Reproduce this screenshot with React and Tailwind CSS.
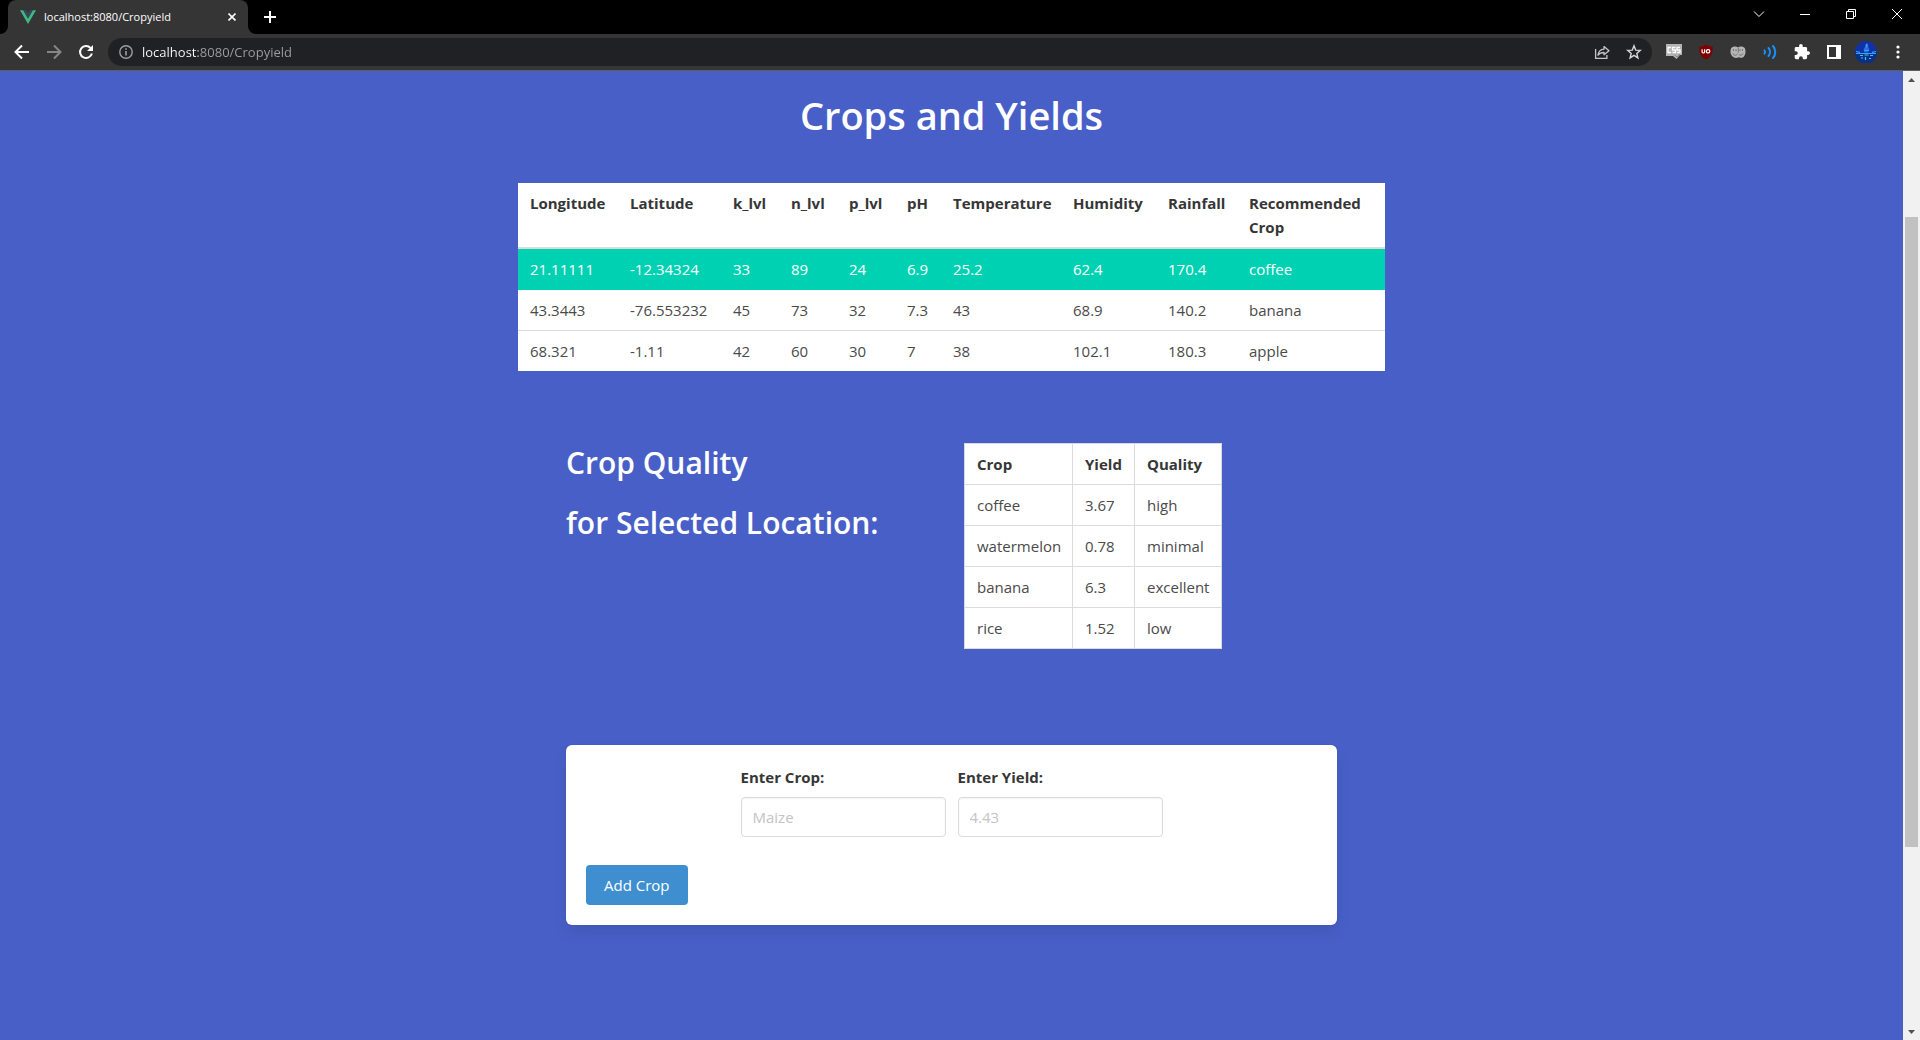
import React from "react";

const readings = [
  ["21.11111", "-12.34324", "33", "89", "24", "6.9", "25.2", "62.4", "170.4", "coffee"],
  ["43.3443", "-76.553232", "45", "73", "32", "7.3", "43", "68.9", "140.2", "banana"],
  ["68.321", "-1.11", "42", "60", "30", "7", "38", "102.1", "180.3", "apple"],
];

const readingColumns = [
  ["Longitude", "w-[100px]"],
  ["Latitude", "w-[103px]"],
  ["k_lvl", "w-[58px]"],
  ["n_lvl", "w-[58px]"],
  ["p_lvl", "w-[58px]"],
  ["pH", "w-[46px]"],
  ["Temperature", "w-[120px]"],
  ["Humidity", "w-[95px]"],
  ["Rainfall", "w-[81px]"],
  ["Recommended Crop", "w-[148px]"],
];

const crops = [
  ["coffee", "3.67", "high"],
  ["watermelon", "0.78", "minimal"],
  ["banana", "6.3", "excellent"],
  ["rice", "1.52", "low"],
];

function WindowButton({ label, children }) {
  return (
    <button type="button" aria-label={label} className="flex h-7 w-[46px] items-center justify-center text-white">
      <svg width="12" height="12" viewBox="0 0 12 12" fill="none" stroke="currentColor" strokeWidth="1">
        {children}
      </svg>
    </button>
  );
}

function ToolButton({ label, className = "text-white", children }) {
  return (
    <button type="button" aria-label={label} className={`flex h-8 w-8 shrink-0 items-center justify-center ${className}`}>
      {children}
    </button>
  );
}

function TabStrip() {
  return (
    <div className="flex h-[34px] items-end bg-black">
      <svg width="8" height="8" viewBox="0 0 8 8" className="shrink-0">
        <path d="M8 0v8H0a8 8 0 0 0 8-8z" fill="#353535" />
      </svg>
      <div className="flex h-full w-60 items-center rounded-t-lg bg-[#353535] pr-2 pl-3">
        <svg width="16" height="16" viewBox="0 0 16 16" className="mr-2 shrink-0">
          <path d="M0 1.2h3.2L8 9.4l4.8-8.2H16L8 15z" fill="#41b883" />
          <path d="M3.2 1.2h3L8 4.3l1.8-3.1h3L8 9.4z" fill="#35495e" />
        </svg>
        <span className="grow truncate text-[11px] leading-4 text-white">localhost:8080/Cropyield</span>
        <button type="button" aria-label="Close tab" className="flex h-4 w-4 items-center justify-center text-white">
          <svg width="8" height="8" viewBox="0 0 8 8" stroke="currentColor" strokeWidth="1.6">
            <path d="M.5.5l7 7M7.5.5l-7 7" />
          </svg>
        </button>
      </div>
      <svg width="8" height="8" viewBox="0 0 8 8" className="shrink-0">
        <path d="M0 0v8h8a8 8 0 0 1-8-8z" fill="#353535" />
      </svg>
      <button type="button" aria-label="New tab" className="flex h-[34px] w-7 items-center justify-center text-white">
        <svg width="12" height="12" viewBox="0 0 12 12" stroke="currentColor" strokeWidth="2">
          <path d="M6 0v12M0 6h12" />
        </svg>
      </button>
      <div className="ml-auto flex self-start">
        <WindowButton label="Search tabs">
          <path d="M1 3.5l5 5 5-5" />
        </WindowButton>
        <WindowButton label="Minimize">
          <path d="M1 6.5h10" />
        </WindowButton>
        <WindowButton label="Restore">
          <path d="M1.500 3.500h7v7h-7zM3.500 3.500v-2h7v7h-2" />
        </WindowButton>
        <WindowButton label="Close">
          <path d="M1 1l10 10M11 1L1 11" />
        </WindowButton>
      </div>
    </div>
  );
}

function Toolbar() {
  return (
    <div className="flex h-[37px] items-center border-b border-[#5e5e5e] bg-[#353535] pr-1.5 pl-1.5">
      <ToolButton label="Back">
        <svg width="16" height="16" viewBox="0 0 16 16" fill="none" stroke="currentColor" strokeWidth="2">
          <path d="M15 8H2.500M8 1.500L1.500 8 8 14.500" />
        </svg>
      </ToolButton>
      <ToolButton label="Forward" className="text-[#868686]">
        <svg width="16" height="16" viewBox="0 0 16 16" fill="none" stroke="currentColor" strokeWidth="2">
          <path d="M1 8h12.500M8 1.500L14.500 8 8 14.500" />
        </svg>
      </ToolButton>
      <ToolButton label="Reload">
        <svg width="16" height="16" viewBox="0 0 16 16" fill="none" stroke="currentColor" strokeWidth="2">
          <path d="M13.900 9.500A6 6 0 1 1 12.500 3.900" />
          <path d="M15 1v6H9z" fill="currentColor" stroke="none" />
        </svg>
      </ToolButton>
      <div className="ml-1.5 flex h-7 grow items-center rounded-full bg-[#202124] pr-0.5 pl-[11px]">
        <svg width="14" height="14" viewBox="0 0 14 14" fill="none" stroke="#9aa0a6" className="mr-[9px] shrink-0">
          <circle cx="7" cy="7" r="6.200" strokeWidth="1.400" />
          <path d="M7 6v4.500M7 3.200v1.600" strokeWidth="1.600" />
        </svg>
        <input
          type="text"
          aria-label="Address"
          defaultValue="localhost:8080/Cropyield"
          className="h-5 min-w-0 grow bg-[linear-gradient(to_right,#ffffff_56px,#9aa0a6_56px)] bg-clip-text p-0 text-[13px] text-transparent outline-none"
        />
        <ToolButton label="Share" className="text-[#c4c7c5]">
          <svg width="16" height="16" viewBox="0 0 16 16" fill="none" stroke="currentColor" strokeWidth="1.300">
            <path d="M1.600 5v9.300h11.300V11" />
            <path d="M10 2.600L15 6.700l-5 4V8.500c-2.800 0-4.500.8-6 2.700.4-3.300 2.500-5.700 6-6z" strokeLinejoin="round" />
          </svg>
        </ToolButton>
        <ToolButton label="Bookmark this page" className="text-[#d5d7da]">
          <svg width="16" height="16" viewBox="0 0 16 16" fill="none" stroke="currentColor" strokeWidth="1.400">
            <path d="M8 1.800l1.700 4.300 4.600.3-3.500 3 1.100 4.500L8 11.400l-3.900 2.500 1.100-4.500-3.500-3 4.600-.3z" />
          </svg>
        </ToolButton>
      </div>
      <div className="ml-1.5 flex">
        <ToolButton label="CSS viewer">
          <svg width="16" height="16" viewBox="0 0 16 16">
            <path d="M0 0h16v11h-2l-3.500 4L7 12H0z" fill="#b4b4b4" />
            <path d="M5 3.500H2v5h3M9.500 3.500h-3v2.500h3v2.500h-3M14 3.500h-3v2.500h3v2.500h-3" fill="none" stroke="#fff" strokeWidth="1.300" />
            <path d="M8.500 10.500l2.500 2.500 3-3" fill="none" stroke="#8a8a8a" />
          </svg>
        </ToolButton>
        <ToolButton label="Content blocker">
          <svg width="16" height="16" viewBox="0 0 16 16">
            <path d="M8 .5c2 1.500 4.300 2 6.700 2 .3 5.800-.7 10-6.700 13C2 12.500 1 8.300 1.300 2.500c2.400 0 4.700-.5 6.700-2z" fill="#800000" />
            <path d="M4.100 5.300v2.400a1.300 1.300 0 0 0 2.600 0V5.300" fill="none" stroke="#fff" strokeWidth="1.200" />
            <rect x="8.500" y="5.700" width="3.200" height="3.200" rx="1.200" fill="none" stroke="#fff" strokeWidth="1.200" />
          </svg>
        </ToolButton>
        <ToolButton label="Masks extension">
          <svg width="16" height="16" viewBox="0 0 16 16">
            <path d="M1 4.500c1.500-2 4.500-2.500 7-1.300 2.500-1.200 5.500-.7 7 1.300 1 3 .5 6.500-1.500 8.500-2 1.300-3.800.8-5 .3-2 1-4.500.7-6-.8C.3 10.500 0 7.500 1 4.500z" fill="#b5b5b5" />
            <path d="M3.500 5v2M6 5v2M10 5v2M12.500 5v2M2.800 9.500c1 2.300 3.600 2.300 4.700.2M9 10.500c1.200 1.300 3.500.8 4.200-1.200M8.300 3.500v5" fill="none" stroke="#666" strokeWidth=".8" />
          </svg>
        </ToolButton>
        <ToolButton label="Read aloud" className="text-[#1592ff]">
          <svg width="16" height="16" viewBox="0 0 16 16" fill="none" stroke="currentColor" strokeWidth="2" strokeLinecap="round">
            <path d="M2.500 6.300c.8 1 .8 2.400 0 3.400M6.500 4c2 2.300 2 5.700 0 8M11 2c3 3.500 3 8.500 0 12" />
          </svg>
        </ToolButton>
        <ToolButton label="Extensions">
          <svg width="16" height="16" viewBox="1 1 22 22" fill="currentColor">
            <path d="M20.500 11H19V7a2 2 0 0 0-2-2h-4V3.500a2.500 2.500 0 0 0-5 0V5H4a2 2 0 0 0-2 2v3.800h1.500a2.700 2.700 0 0 1 0 5.400H2V20a2 2 0 0 0 2 2h3.800v-1.500a2.700 2.700 0 0 1 5.400 0V22H17a2 2 0 0 0 2-2v-4h1.500a2.500 2.500 0 0 0 0-5z" />
          </svg>
        </ToolButton>
        <ToolButton label="Side panel">
          <svg width="14" height="14" viewBox="0 0 14 14">
            <path d="M0 0h14v14H0zM2 2v10h7V2z" fill="currentColor" fillRule="evenodd" />
          </svg>
        </ToolButton>
        <ToolButton label="Profile">
          <svg width="22" height="22" viewBox="0 0 22 22">
            <circle cx="11" cy="11" r="11" fill="#1230a8" />
            <path d="M0 12h22A11 11 0 0 1 0 12z" fill="#0a2f86" />
            <path d="M11 2.500c2-.5 3 1.500 2 3l1.500 3.500-2 2.500H9.500L8.500 8.500 10 6z" fill="#2a6fe0" />
            <path d="M1 10.500l4 .8M21 10.500l-4 .8M1 12.500h20M11.500 3v3.500M9 9.500h5" stroke="#2fa4ee" strokeWidth="1.200" fill="none" />
            <path d="M5 14.500h3M9.500 14h4M15 14.500h3M6 17h2M10.500 16v3M14 17.500h2" stroke="#3cc4ee" strokeWidth="1.200" fill="none" />
          </svg>
        </ToolButton>
        <ToolButton label="Browser menu">
          <svg width="4" height="14" viewBox="0 0 4 14" fill="currentColor">
            <circle cx="2" cy="2" r="1.600" />
            <circle cx="2" cy="7" r="1.600" />
            <circle cx="2" cy="12" r="1.600" />
          </svg>
        </ToolButton>
      </div>
    </div>
  );
}

function Scrollbar() {
  return (
    <div className="flex w-[17px] shrink-0 flex-col bg-[#f1f1f1]">
      <button type="button" aria-label="Scroll up" className="flex h-[17px] items-center justify-center">
        <svg width="7" height="4" viewBox="0 0 7 4" fill="#505050">
          <path d="M0 4L3.500 0 7 4z" />
        </svg>
      </button>
      <div className="flex-[129]" />
      <div className="mx-0.5 flex-[630] bg-[#c1c1c1]" />
      <div className="flex-[176]" />
      <button type="button" aria-label="Scroll down" className="flex h-[17px] items-center justify-center">
        <svg width="7" height="4" viewBox="0 0 7 4" fill="#505050">
          <path d="M0 0l3.500 4L7 0z" />
        </svg>
      </button>
    </div>
  );
}

function ReadingsTable() {
  return (
    <table className="w-full max-w-[867px] table-fixed border-collapse bg-white text-left">
      <thead>
        <tr className="border-b-2 border-[#dbdbdb] align-top text-[#363636]">
          {readingColumns.map(([name, width]) => (
            <th key={name} scope="col" className={`px-3 py-2 font-bold ${width}`}>
              {name}
            </th>
          ))}
        </tr>
      </thead>
      <tbody>
        {readings.map((row, i) => (
          <tr
            key={row[0]}
            className={
              i === 0
                ? "border-b border-[#00d1b2] bg-[#00d1b2] text-white"
                : "border-b border-[#dbdbdb] last:border-b-0"
            }
          >
            {row.map((value, j) => (
              <td key={j} className="px-3 py-2">
                {value}
              </td>
            ))}
          </tr>
        ))}
      </tbody>
    </table>
  );
}

function QualityTable() {
  return (
    <table className="w-[258px] table-fixed border-collapse bg-white text-left">
      <thead>
        <tr className="text-[#363636]">
          <th scope="col" className="w-[108px] border border-[#dbdbdb] px-3 py-2 font-bold">Crop</th>
          <th scope="col" className="w-[62px] border border-[#dbdbdb] px-3 py-2 font-bold">Yield</th>
          <th scope="col" className="border border-[#dbdbdb] px-3 py-2 font-bold">Quality</th>
        </tr>
      </thead>
      <tbody>
        {crops.map((row) => (
          <tr key={row[0]}>
            {row.map((value) => (
              <td key={value} className="border border-[#dbdbdb] px-3 py-2">
                {value}
              </td>
            ))}
          </tr>
        ))}
      </tbody>
    </table>
  );
}

function Field({ id, label, placeholder }) {
  return (
    <div className="w-[205px]">
      <label htmlFor={id} className="mb-2 block font-bold text-[#363636]">
        {label}
      </label>
      <input
        id={id}
        type="text"
        placeholder={placeholder}
        className="h-10 w-full rounded border border-[#dbdbdb] bg-white px-[11px] text-[#363636] shadow-[inset_0_1px_2px_rgba(10,10,10,0.05)] placeholder:text-[#c4c4c4]"
      />
    </div>
  );
}

export default function App() {
  return (
    <div className="flex min-h-screen flex-col font-['Open_Sans','Noto_Sans',sans-serif]">
      <header>
        <TabStrip />
        <Toolbar />
      </header>
      <div className="flex grow">
        <main className="flex grow flex-col items-center bg-[#485fc7] text-[15px] leading-6 text-[#4a4a4a]">
          <h1 className="mt-5 text-[38px] leading-[48px] font-semibold text-white">Crops and Yields</h1>
          <div className="mt-11 flex w-full justify-center">
            <ReadingsTable />
          </div>
          <section className="mt-[72px] flex w-full max-w-[771px] items-start">
            <div className="w-[398px] pt-0.5 text-[30px] leading-9 font-semibold text-white">
              <h2>Crop Quality</h2>
              <h2 className="mt-6">for Selected Location:</h2>
            </div>
            <QualityTable />
          </section>
          <form
            onSubmit={(e) => e.preventDefault()}
            className="mt-24 w-full max-w-[771px] rounded-md bg-white p-5 shadow-[0_8px_16px_-2px_rgba(10,10,10,0.1),0_0_0_1px_rgba(10,10,10,0.02)]"
          >
            <div className="flex justify-center gap-3">
              <Field id="crop" label="Enter Crop:" placeholder="Maize" />
              <Field id="yield" label="Enter Yield:" placeholder="4.43" />
            </div>
            <button type="submit" className="mt-7 h-10 rounded bg-[#3e8ed0] px-[18px] text-white">
              Add Crop
            </button>
          </form>
        </main>
        <Scrollbar />
      </div>
    </div>
  );
}
